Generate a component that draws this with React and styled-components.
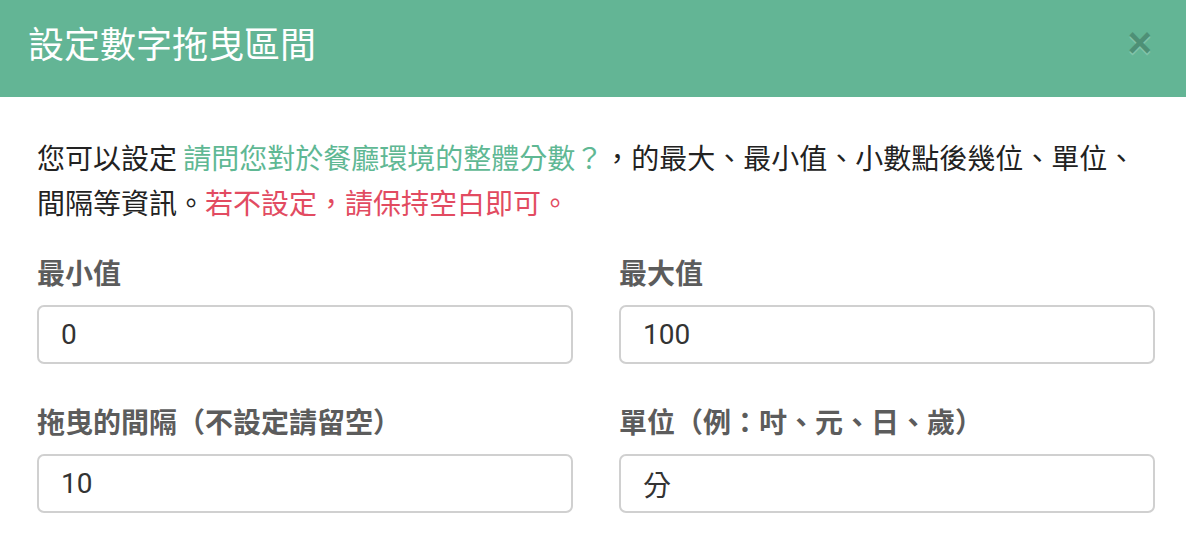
import React from 'react'
import styled, { createGlobalStyle } from 'styled-components'

const GlobalStyle = createGlobalStyle`
  html, body {
    margin: 0;
    padding: 0;
    background: #fff;
  }
  body {
    font-family: "Noto Sans CJK TC", "Noto Sans", sans-serif;
  }
`

const Modal = styled.div`
  width: 1186px;
  height: 546px;
  background: #fff;
  overflow: hidden;
`

const Header = styled.div`
  height: 97px;
  box-sizing: border-box;
  background-color: #63b595;
  padding: 20px 28px 0 28px;
  display: flex;
  justify-content: space-between;
  align-items: flex-start;
`

const Title = styled.h4`
  margin: 0;
  font-size: 36px;
  line-height: 44px;
  font-weight: 400;
  color: #fff;
  font-family: "Noto Sans CJK TC", sans-serif;
`

const Close = styled.button`
  border: none;
  background: transparent;
  padding: 0;
  margin: 3px 6px 0 0;
  cursor: pointer;
  font-family: "Liberation Sans", Arial, sans-serif;
  font-size: 42px;
  font-weight: bold;
  line-height: 40px;
  color: #000;
  opacity: 0.2;
  text-shadow: 0 2px 0 #fff;
`

const Body = styled.div`
  padding: 38px 31px 0 37px;
`

const Intro = styled.p`
  margin: 0 0 30px 0;
  font-size: 28px;
  line-height: 45px;
  color: #222;
`

const Hint = styled.span`
  color: ${(p) => (p.$tone === 'warn' ? '#e24b61' : '#5fb894')};
`

const Grid = styled.div`
  display: grid;
  grid-template-columns: 536px 536px;
  column-gap: 46px;
  row-gap: 40px;
`

const Group = styled.div`
  display: flex;
  flex-direction: column;
`

const Label = styled.label`
  font-size: 28px;
  line-height: 34px;
  font-weight: 700;
  color: #5c5c5c;
  margin-bottom: 16px;
`

const Input = styled.input`
  box-sizing: border-box;
  width: 100%;
  height: 59px;
  border: 2px solid #d0d0d0;
  border-radius: 7px;
  padding: 0 22px;
  font-family: Roboto, "Noto Sans CJK TC", sans-serif;
  font-size: 28px;
  color: #333;
  outline: none;
  background: #fff;
`

const fields = [
  { label: '最小值', value: '0' },
  { label: '最大值', value: '100' },
  { label: '拖曳的間隔（不設定請留空）', value: '10' },
  { label: '單位（例：吋、元、日、歲）', value: '分' },
]

const App = () => {
  return (
    <Modal>
      <GlobalStyle />
      <Header>
        <Title>設定數字拖曳區間</Title>
        <Close aria-label="close">×</Close>
      </Header>
      <Body>
        <Intro>
          您可以設定 <Hint>請問您對於餐廳環境的整體分數？</Hint>，的最大、最小值、小數點後幾位、單位、間隔等資訊。<Hint $tone="warn">若不設定，請保持空白即可。</Hint>
        </Intro>
        <Grid>
          {fields.map((f) => (
            <Group key={f.label}>
              <Label>{f.label}</Label>
              <Input defaultValue={f.value} />
            </Group>
          ))}
        </Grid>
      </Body>
    </Modal>
  )
}

export default App
